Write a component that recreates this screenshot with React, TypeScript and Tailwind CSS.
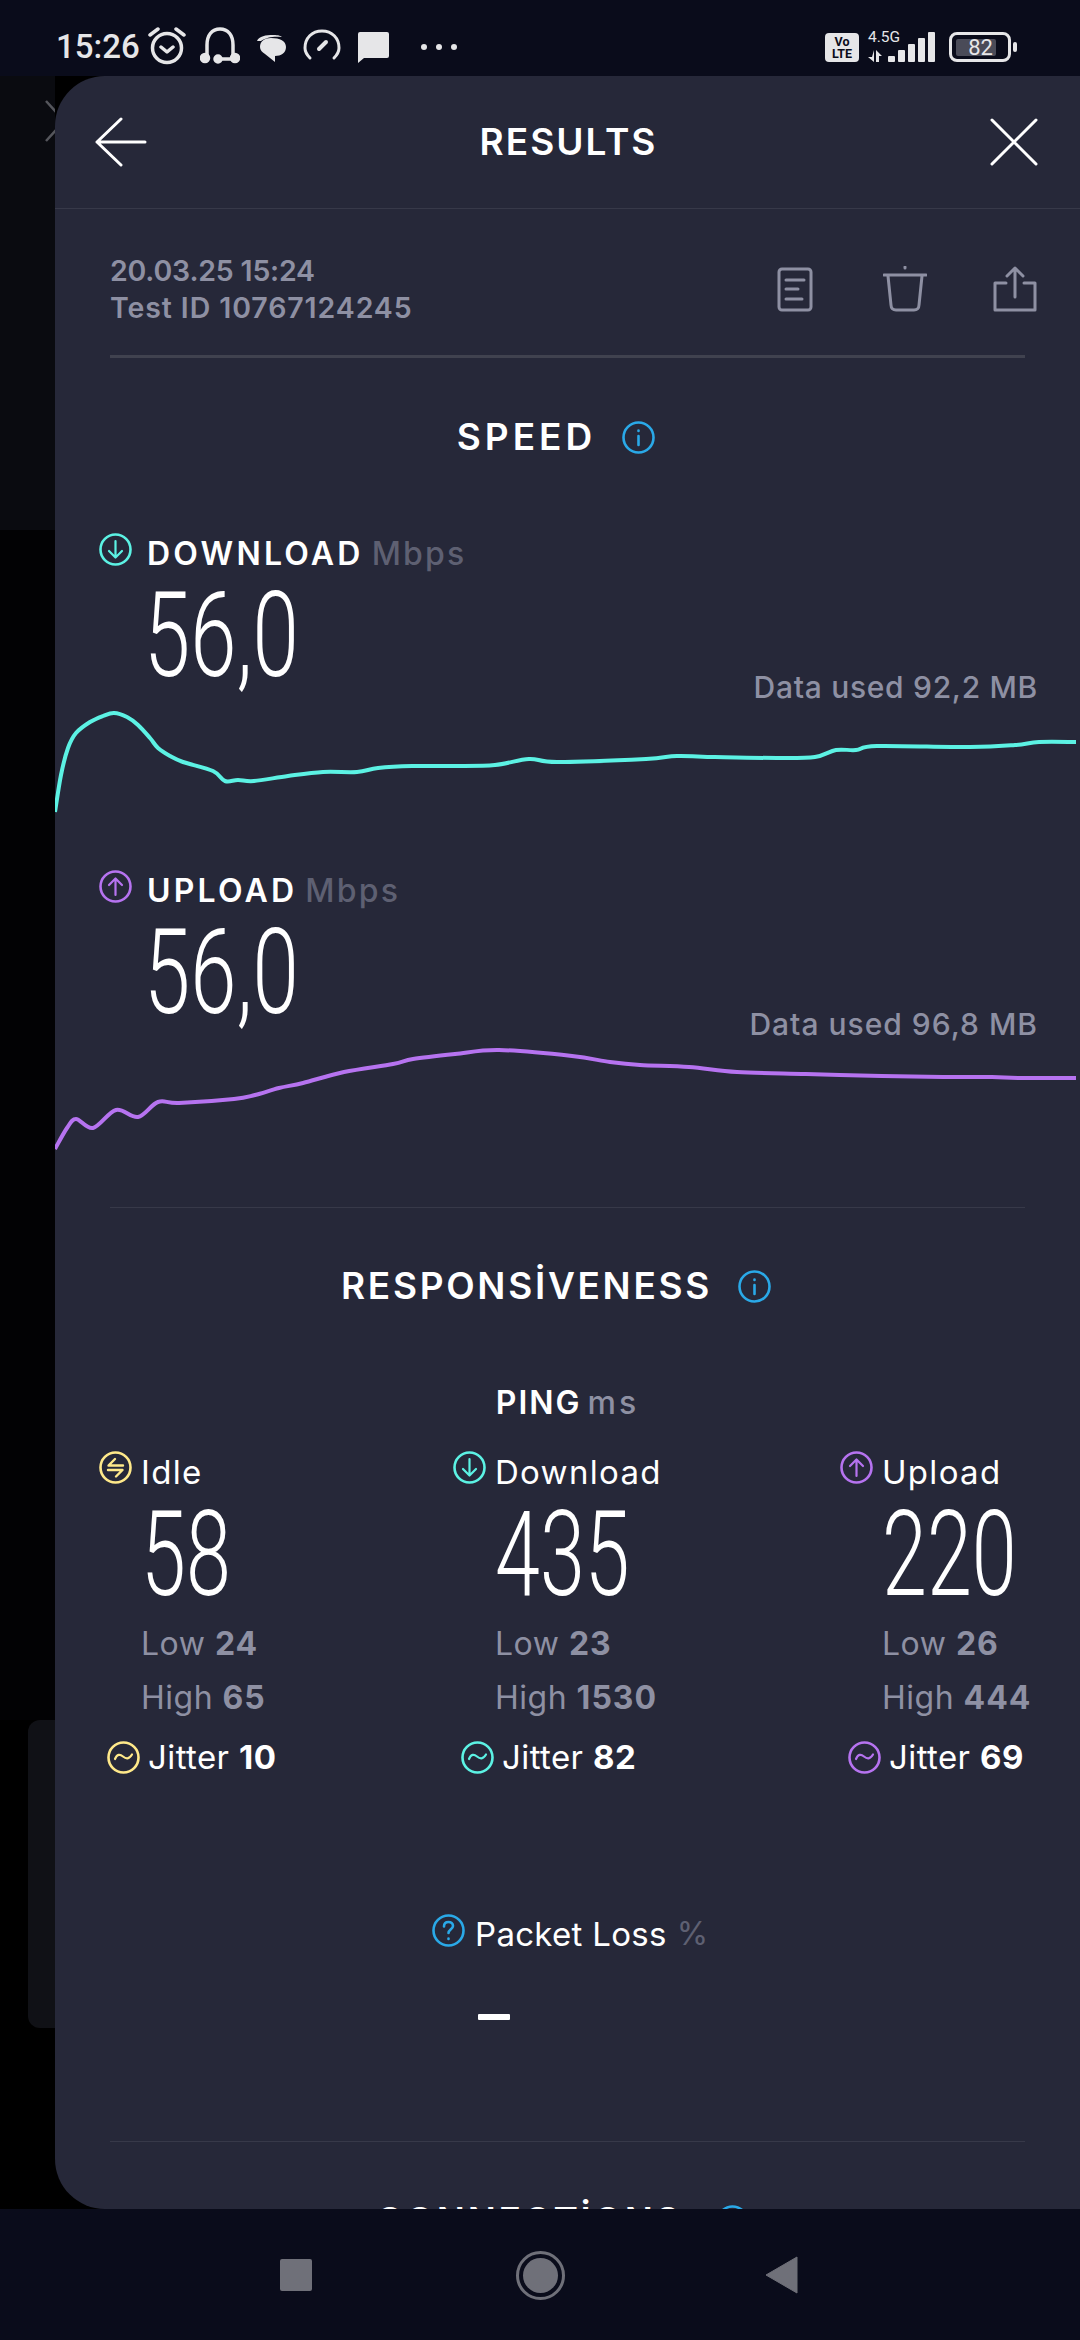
const textFont = "font-['Inter','Liberation_Sans',sans-serif]";

const DOWN_LINE = '0,812 6,775 13,748 21,733 35,722 48,716 59,713 72,717 83,725 95,738 103,748 115,756 128,762 158,771 170,781 183,780 199,781 233,776 268,772 302,772 323,768 357,766 399,766 440,765 474,759 502,762 591,759 622,756 660,757 722,758 760,757 781,750 801,750 822,746 915,747 960,745 984,742 1021,742';
const UP_LINE = '0,1149 12,1128 21,1119 38,1128 61,1110 83,1117 103,1102 124,1103 179,1099 200,1095 224,1088 248,1083 289,1072 338,1064 358,1059 400,1054 444,1050 517,1056 555,1062 585,1065 634,1067 682,1072 751,1074 827,1076 888,1077 937,1077 964,1078 1021,1078';

// catmull-rom through the sampled points, so the small zigzags stay
function linePath(points: string, top: number) {
  const pts = points.split(' ').map((p) => {
    const [x, y] = p.split(',').map(Number);
    return [x, y - top];
  });
  let d = `M${pts[0][0]} ${pts[0][1]}`;
  for (let i = 0; i < pts.length - 1; i++) {
    const p0 = pts[Math.max(i - 1, 0)];
    const p1 = pts[i];
    const p2 = pts[i + 1];
    const p3 = pts[Math.min(i + 2, pts.length - 1)];
    const c1x = p1[0] + (p2[0] - p0[0]) / 6;
    const c1y = p1[1] + (p2[1] - p0[1]) / 6;
    const c2x = p2[0] - (p3[0] - p1[0]) / 6;
    const c2y = p2[1] - (p3[1] - p1[1]) / 6;
    d += `C${c1x} ${c1y} ${c2x} ${c2y} ${p2[0]} ${p2[1]}`;
  }
  return d;
}

function RoundIcon({ color, children, className = '' }: { color: string; children?: React.ReactNode; className?: string }) {
  return (
    <svg width="33" height="33" viewBox="0 0 33 33" fill="none" stroke={color} strokeWidth="2.6" strokeLinecap="round" strokeLinejoin="round" className={`shrink-0 ${className}`}>
      <circle cx="16.5" cy="16.5" r="15" />
      {children}
    </svg>
  );
}

const ArrowDown = () => <path d="M16.5 8v16M10 18l6.5 6.5L23 18" strokeWidth="2.2" />;
const ArrowUp = () => <path d="M16.5 25V9M10 15l6.5-6.5L23 15" strokeWidth="2.2" />;
const Wave = () => <path d="M8 18c2-5 5-5 8-2.500s6 3 9-2" strokeWidth="2.2" />;
const Bolt = () => <path d="M24 14.500H9.500L16 8M9 19h14.500L17 25.500" strokeWidth="2.4" />;

function BigNumber({ value, className }: { value: string; className: string }) {
  return (
    <div className={`h-[86px] font-['Roboto',sans-serif] font-light text-[119px] leading-[86px] text-white origin-left whitespace-nowrap ${className}`}>
      {value}
    </div>
  );
}

function SectionTitle({ title, className = '', tracking = 'tracking-[2.7px]' }: { title: string; className?: string; tracking?: string }) {
  return (
    <div className={`flex items-center justify-center ${className}`}>
      <span className={`text-[37px] leading-[40px] font-semibold text-white ${tracking}`}>{title}</span>
      <RoundIcon color="#2aa9e8" className="ml-[26px]">
        <path d="M16.500 15v9M16.500 9.500v.5" />
      </RoundIcon>
    </div>
  );
}

function SpeedBlock({ label, color, icon, value, used, usedTracking, points, top, height }: {
  label: string;
  color: string;
  icon: React.ReactNode;
  value: string;
  used: string;
  usedTracking: string;
  points: string;
  top: number;
  height: number;
}) {
  return (
    <div>
      <div className="flex items-start pl-[44px] h-[38px]">
        <RoundIcon color={color}>{icon}</RoundIcon>
        <span className="ml-[15px] mt-[2px] text-[32px] leading-[38px] font-semibold text-white tracking-[3.2px]">{label}</span>
        <span className="ml-[8px] mt-[2px] text-[32px] leading-[38px] font-medium text-[#5e6072] tracking-[2.2px]">Mbps</span>
      </div>
      <div className="pl-[89px] mt-[22px]">
        <BigNumber value={value} className="scale-x-[.7]" />
      </div>
      <div className={`flex justify-end pr-[42px] -mt-[10px] text-[30px] leading-[36px] font-medium text-[#8e90a3] ${usedTracking}`}>{used}</div>
      <svg width="1025" height={height} viewBox={`0 0 1025 ${height}`} fill="none" className="block">
        <path d={linePath(points, top)} stroke={color} strokeWidth="4" strokeLinejoin="round" />
      </svg>
    </div>
  );
}

function PingColumn({ title, color, icon, value, low, high, jitter }: {
  title: string;
  color: string;
  icon: React.ReactNode;
  value: string;
  low: string;
  high: string;
  jitter: string;
}) {
  return (
    <div>
      <div className="flex items-start h-[38px]">
        <RoundIcon color={color}>{icon}</RoundIcon>
        <span className="ml-[9px] mt-[2px] text-[33px] leading-[38px] text-white tracking-[1.3px]">{title}</span>
      </div>
      <div className="pl-[42px] mt-[23px]">
        <BigNumber value={value} className="scale-x-[.68]" />
      </div>
      <div className="pl-[42px] mt-[19px] text-[32px] leading-[54px] text-[#8e90a3] tracking-[0.5px]">
        <div>Low <b className="font-bold tracking-[1px]">{low}</b></div>
        <div>High <b className="font-bold tracking-[1px]">{high}</b></div>
      </div>
      <div className="flex items-center pl-[8px] mt-[13px] h-[38px]">
        <RoundIcon color={color}><Wave /></RoundIcon>
        <span className="ml-[8px] -mt-[1px] text-[33px] leading-[38px] text-white tracking-[0.4px]">Jitter <b className="font-bold">{jitter}</b></span>
      </div>
    </div>
  );
}

function StatusBar() {
  return (
    <div className="h-[76px] shrink-0 bg-[#0a0c1b] flex items-start text-[#e6e6e8]">
      <span className="ml-[56px] mt-[27px] font-['Roboto',sans-serif] font-medium text-[33px] leading-[40px]">15:26</span>
      <svg width="40" height="38" viewBox="0 0 40 38" fill="none" stroke="currentColor" strokeWidth="3.500" strokeLinecap="round" strokeLinejoin="round" className="ml-[7px] mt-[27px]">
        <circle cx="20" cy="21" r="14.500" />
        <path d="M14 20l6 5 6-5M3 8l8-6M37 8l-8-6" />
      </svg>
      <svg width="40" height="37" viewBox="0 0 40 37" fill="none" stroke="currentColor" strokeWidth="3.500" strokeLinecap="round" className="ml-[13px] mt-[27px]">
        <path d="M7 30V18C7 8 12 2 20 2s13 6 13 16v12" />
        <path d="M17 32h17" />
        <circle cx="5" cy="31" r="3.500" fill="currentColor" />
        <circle cx="18" cy="32" r="3" fill="currentColor" />
        <circle cx="35" cy="31" r="3.500" fill="currentColor" />
      </svg>
      <svg width="30" height="28" viewBox="0 0 30 28" fill="currentColor" className="ml-[17px] mt-[34px]">
        <path d="M0 7C2 2 9 1 16 1c6 0 8 1 9 2-7-1-16 0-21 4z" />
        <path d="M14 4c9 0 15 3 15 9s-5 9-11 9v6l-10-8c-3-2-5-4-5-7 0-6 5-9 11-9z" />
      </svg>
      <svg width="38" height="32" viewBox="0 0 38 32" fill="none" stroke="currentColor" strokeWidth="3" strokeLinecap="round" className="ml-[16px] mt-[29px]">
        <path d="M7 29C3 25 2 22 2 19 2 9 9 2 19 2s17 7 17 17c0 3-1 6-5 10" />
        <path d="M16 20l7-7" strokeWidth="4" />
      </svg>
      <svg width="31" height="31" viewBox="0 0 31 31" fill="currentColor" className="ml-[17px] mt-[32px]">
        <path d="M2 0h27a2 2 0 0 1 2 2v22a2 2 0 0 1-2 2H6l-6 5V2a2 2 0 0 1 2-2z" />
      </svg>
      <div className="ml-[32px] mt-[44px] flex gap-[9px]">
        <span className="w-[6px] h-[6px] rounded-full bg-[#e6e6e8]" />
        <span className="w-[6px] h-[6px] rounded-full bg-[#e6e6e8]" />
        <span className="w-[6px] h-[6px] rounded-full bg-[#e6e6e8]" />
      </div>
      <div className="ml-auto flex items-start">
        <div className="mt-[33px] w-[34px] h-[29px] rounded-[4px] bg-[#e6e6e8] text-[#0a0c1b] font-['Roboto',sans-serif] font-bold text-[12.500px] leading-[12px] text-center pt-[3px]">
          <div>Vo</div>
          <div>LTE</div>
        </div>
        <div className="ml-[9px] mt-[30px] w-[32px] font-['Roboto',sans-serif] text-[15.500px] leading-[14px] whitespace-nowrap">4.5G</div>
        <svg width="68" height="31" viewBox="0 0 68 31" fill="currentColor" className="-ml-[32px] mt-[32px]">
          <path d="M6 18v12L0 25h4zM8 18l6 6h-3v6H8z" />
          <rect x="20" y="24" width="7" height="6" rx="1" />
          <rect x="30" y="18" width="7" height="12" rx="1" />
          <rect x="40" y="12" width="7" height="18" rx="1" />
          <rect x="50" y="6" width="7" height="24" rx="1" />
          <rect x="60" y="0" width="7" height="30" rx="1" />
        </svg>
        <div className="ml-[13px] mt-[32px] w-[62px] h-[30px] rounded-[8px] border-[3.500px] border-[#e6e6e8] flex items-center">
          <div className="ml-[4px] w-[40px] h-[17px] bg-[#4a4b58] rounded-[2px] flex items-center justify-center font-['Roboto',sans-serif] text-[22px] leading-[17px] pl-[9px]">82</div>
        </div>
        <div className="ml-[2px] mt-[42px] w-[4px] h-[10px] rounded-[2px] bg-[#e6e6e8]" />
        <div className="w-[63px]" />
      </div>
    </div>
  );
}

function NavBar() {
  return (
    <div className="h-[131px] shrink-0 bg-[#0a0c1b] flex items-start">
      <div className="ml-[280px] mt-[50px] w-[32px] h-[32px] rounded-[2px] bg-[#6f7079]" />
      <div className="ml-[204px] mt-[42px] w-[49px] h-[49px] rounded-full border-[3px] border-[#6f7079] flex items-center justify-center">
        <div className="w-[35px] h-[35px] rounded-full bg-[#6f7079]" />
      </div>
      <svg width="33" height="38" viewBox="0 0 33 38" className="ml-[200px] mt-[47px]">
        <path d="M32 1v36L1 19z" fill="#6f7079" stroke="#6f7079" strokeLinejoin="round" />
      </svg>
    </div>
  );
}

export default function App() {
  return (
    <div className={`w-[1080px] h-[2340px] flex flex-col overflow-hidden bg-black ${textFont}`}>
      <StatusBar />
      <div className="flex-1 flex min-h-0">
        {/* what shows behind the sheet */}
        <div className="w-[55px] shrink-0 flex flex-col">
          <div className="h-[454px] bg-[#0a0b10] pt-[24px] pl-[45px]">
            <svg width="10" height="42" viewBox="0 0 10 42" fill="none" stroke="#55565c" strokeWidth="2.500">
              <path d="M1 1l10 11M1 41l10-11" />
            </svg>
          </div>
          <div className="h-[1190px] bg-[#020204]" />
          <div className="ml-[28px] h-[308px] bg-[#101116] rounded-l-[12px]" />
        </div>

        <div className="flex-1 bg-[#262839] rounded-l-[50px] overflow-hidden">
          <div className="h-[133px] border-b border-[#373949] flex items-center justify-between pl-[40px] pr-[42px]">
            <svg width="52" height="50" viewBox="0 0 52 50" fill="none" stroke="white" strokeWidth="3" strokeLinecap="round" strokeLinejoin="round">
              <path d="M26 2L2 25l24 23M2 25h48" />
            </svg>
            <span className="text-[37px] leading-[40px] font-semibold text-white tracking-[2px]">RESULTS</span>
            <svg width="48" height="48" viewBox="0 0 48 48" fill="none" stroke="white" strokeWidth="3" strokeLinecap="round">
              <path d="M2 2l44 44M46 2L2 46" />
            </svg>
          </div>

          <div className="mx-[55px] pt-[43px] h-[149px] border-b-[3px] border-[#40424f] flex items-start justify-between text-[#8e90a3]">
            <div className="text-[28.500px] leading-[37px] font-semibold">
              <div className="tracking-[-0.2px]">20.03.25 15:24</div>
              <div className="tracking-[0.9px]">Test ID 10767124245</div>
            </div>
            <div className="flex items-start -mr-[12px]">
              <svg width="36" height="45" viewBox="0 0 36 45" fill="none" stroke="#8e90a3" strokeWidth="3" strokeLinecap="round" className="mt-[15px]">
                <rect x="2" y="2" width="32" height="41" rx="3" />
                <path d="M9 13h18M9 22h12M9 32h16" />
              </svg>
              <svg width="44" height="46" viewBox="0 0 44 46" fill="none" stroke="#8e90a3" strokeWidth="3" strokeLinecap="round" className="ml-[70px] mt-[14px]">
                <path d="M22 1v1M1 9h42M5 10l3 29c0 3 2 5 5 5h18c3 0 5-2 5-5l3-29" />
              </svg>
              <svg width="44" height="46" viewBox="0 0 44 46" fill="none" stroke="#8e90a3" strokeWidth="3" strokeLinecap="round" strokeLinejoin="round" className="ml-[66px] mt-[14px]">
                <path d="M22 31V2M14 10l8-8 8 8M13 17H2v27h40V17H31" />
              </svg>
            </div>
          </div>

          <SectionTitle title="SPEED" tracking="tracking-[4px]" className="mt-[59px] pr-[23px]" />

          <div className="mt-[76px]">
            <SpeedBlock label="DOWNLOAD" color="#5cf2e4" icon={<ArrowDown />} value="56,0" used="Data used 92,2 MB" usedTracking="tracking-[0.7px]" points={DOWN_LINE} top={705} height={110} />
          </div>
          <div className="mt-[55px]">
            <SpeedBlock label="UPLOAD" color="#b673f0" icon={<ArrowUp />} value="56,0" used="Data used 96,8 MB" usedTracking="tracking-[1px]" points={UP_LINE} top={1042} height={115} />
          </div>

          <div className="mx-[55px] mt-[50px] border-t border-[#373949]" />

          <SectionTitle title="RESPONSİVENESS" className="mt-[58px] pr-[23px]" />

          <div className="mt-[78px] flex items-center justify-center text-[32px] leading-[38px]">
            <span className="font-semibold text-white tracking-[2px]">PING</span>
            <span className="ml-[6px] font-medium text-[#8e90a3] tracking-[3px]">ms</span>
          </div>

          <div className="mt-[29px] pl-[44px] grid grid-cols-[354px_387px_1fr]">
            <PingColumn title="Idle" color="#ffe98a" icon={<Bolt />} value="58" low="24" high="65" jitter="10" />
            <PingColumn title="Download" color="#5cf2e4" icon={<ArrowDown />} value="435" low="23" high="1530" jitter="82" />
            <PingColumn title="Upload" color="#b673f0" icon={<ArrowUp />} value="220" low="26" high="444" jitter="69" />
          </div>

          <div className="mt-[138px] pl-[377px] flex items-start h-[38px]">
            <RoundIcon color="#2aa9e8">
              <path d="M12 12.500c0-3 2-4.500 4.500-4.500s4.500 1.500 4.500 4c0 3-4.500 3.500-4.500 7M16.500 24.500v.5" />
            </RoundIcon>
            <span className="ml-[10px] mt-[1px] text-[33px] leading-[38px] text-white whitespace-nowrap tracking-[0.3px]">Packet Loss</span>
            <span className="ml-[10px] mt-[1px] text-[32px] leading-[38px] text-[#5e6072]">%</span>
          </div>
          <div className="mt-[62px] ml-[423px] w-[32px] h-[6px] rounded-[1px] bg-white" />

          <div className="mx-[55px] mt-[121px] border-t border-[#373949]" />

          <SectionTitle title="CONNECTİONS" className="mt-[59px] pr-[10px] gap-[8px]" />
        </div>
      </div>
      <NavBar />
    </div>
  );
}
